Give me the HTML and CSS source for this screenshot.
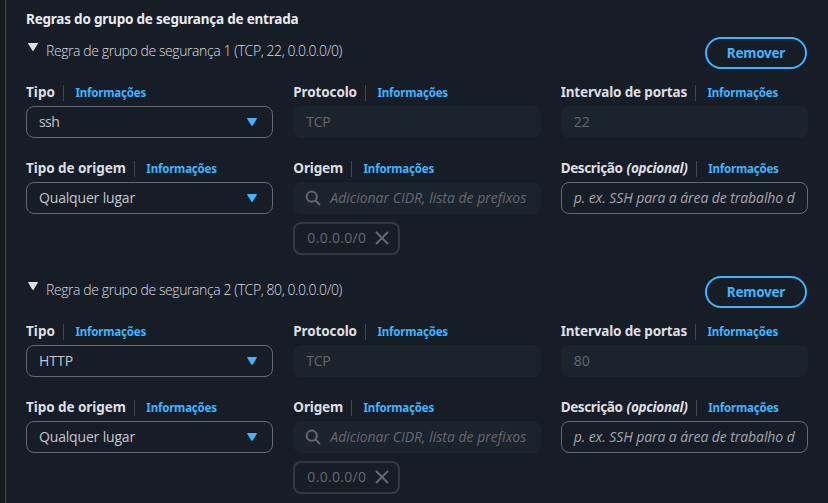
FILE: index.html
```html
<!DOCTYPE html>
<html lang="pt-BR">
<head>
<meta charset="utf-8">
<title>Regras do grupo de segurança</title>
<link rel="stylesheet" href="styles.css">
</head>
<body>
<main class="panel">
  <h1 class="heading">Regras do grupo de segurança de entrada</h1>

  <section class="rule">
    <header class="rule-header">
      <svg class="toggle" width="10" height="8" viewBox="0 0 10 8"><path d="M0.6 0H9.4Q10.2 0 9.8 0.8L5.7 7.5Q5 8.4 4.3 7.5L0.2 0.8Q-0.2 0 0.6 0Z"/></svg>
      <h2 class="rule-title">Regra de grupo de segurança 1 (TCP, 22, 0.0.0.0/0)</h2>
      <button class="remove">Remover</button>
    </header>
    <div class="grid">
      <div class="field">
        <div class="label-row"><span class="label t-tipo">Tipo</span><a class="info">Informações</a></div>
        <div class="control select"><span class="t-ssh">ssh</span><svg class="caret" width="10" height="8" viewBox="0 0 10 8"><path d="M0.6 0H9.4Q10.2 0 9.8 0.8L5.7 7.5Q5 8.4 4.3 7.5L0.2 0.8Q-0.2 0 0.6 0Z"/></svg></div>
      </div>
      <div class="field">
        <div class="label-row"><span class="label">Protocolo</span><a class="info">Informações</a></div>
        <div class="control disabled"><span class="t-tcp">TCP</span></div>
      </div>
      <div class="field">
        <div class="label-row"><span class="label t-ports">Intervalo de portas</span><a class="info">Informações</a></div>
        <div class="control disabled">22</div>
      </div>
      <div class="field">
        <div class="label-row"><span class="label t-source">Tipo de origem</span><a class="info">Informações</a></div>
        <div class="control select"><span class="t-any">Qualquer lugar</span><svg class="caret" width="10" height="8" viewBox="0 0 10 8"><path d="M0.6 0H9.4Q10.2 0 9.8 0.8L5.7 7.5Q5 8.4 4.3 7.5L0.2 0.8Q-0.2 0 0.6 0Z"/></svg></div>
      </div>
      <div class="field">
        <div class="label-row"><span class="label">Origem</span><a class="info">Informações</a></div>
        <div class="control disabled search"><svg width="16" height="16" viewBox="0 0 16 16"><circle cx="6.7" cy="6.7" r="5.1"/><path d="M10.4 10.4L15 15"/></svg><span class="placeholder">Adicionar CIDR, lista de prefixos</span></div>
        <div class="token"><span>0.0.0.0/0</span><svg width="14" height="14" viewBox="0 0 14 14"><path d="M1 1L13 13M13 1L1 13"/></svg></div>
      </div>
      <div class="field">
        <div class="label-row"><span class="label t-desc">Descrição</span><em class="optional">(opcional)</em><a class="info">Informações</a></div>
        <div class="control"><span class="example">p. ex. SSH para a área de trabalho d</span></div>
      </div>
    </div>
  </section>

  <section class="rule">
    <header class="rule-header">
      <svg class="toggle" width="10" height="8" viewBox="0 0 10 8"><path d="M0.6 0H9.4Q10.2 0 9.8 0.8L5.7 7.5Q5 8.4 4.3 7.5L0.2 0.8Q-0.2 0 0.6 0Z"/></svg>
      <h2 class="rule-title">Regra de grupo de segurança 2 (TCP, 80, 0.0.0.0/0)</h2>
      <button class="remove">Remover</button>
    </header>
    <div class="grid">
      <div class="field">
        <div class="label-row"><span class="label t-tipo">Tipo</span><a class="info">Informações</a></div>
        <div class="control select"><span>HTTP</span><svg class="caret" width="10" height="8" viewBox="0 0 10 8"><path d="M0.6 0H9.4Q10.2 0 9.8 0.8L5.7 7.5Q5 8.4 4.3 7.5L0.2 0.8Q-0.2 0 0.6 0Z"/></svg></div>
      </div>
      <div class="field">
        <div class="label-row"><span class="label">Protocolo</span><a class="info">Informações</a></div>
        <div class="control disabled"><span class="t-tcp">TCP</span></div>
      </div>
      <div class="field">
        <div class="label-row"><span class="label t-ports">Intervalo de portas</span><a class="info">Informações</a></div>
        <div class="control disabled">80</div>
      </div>
      <div class="field">
        <div class="label-row"><span class="label t-source">Tipo de origem</span><a class="info">Informações</a></div>
        <div class="control select"><span class="t-any">Qualquer lugar</span><svg class="caret" width="10" height="8" viewBox="0 0 10 8"><path d="M0.6 0H9.4Q10.2 0 9.8 0.8L5.7 7.5Q5 8.4 4.3 7.5L0.2 0.8Q-0.2 0 0.6 0Z"/></svg></div>
      </div>
      <div class="field">
        <div class="label-row"><span class="label">Origem</span><a class="info">Informações</a></div>
        <div class="control disabled search"><svg width="16" height="16" viewBox="0 0 16 16"><circle cx="6.7" cy="6.7" r="5.1"/><path d="M10.4 10.4L15 15"/></svg><span class="placeholder">Adicionar CIDR, lista de prefixos</span></div>
        <div class="token"><span>0.0.0.0/0</span><svg width="14" height="14" viewBox="0 0 14 14"><path d="M1 1L13 13M13 1L1 13"/></svg></div>
      </div>
      <div class="field">
        <div class="label-row"><span class="label t-desc">Descrição</span><em class="optional">(opcional)</em><a class="info">Informações</a></div>
        <div class="control"><span class="example">p. ex. SSH para a área de trabalho d</span></div>
      </div>
    </div>
  </section>
</main>
</body>
</html>
```
FILE: styles.css
```css
* { box-sizing: border-box; }

body {
  margin: 0;
  height: 503px;
  padding-left: 5px;
  overflow: hidden;
  background: #141920;
  color: #c6c6cd;
  font-family: "Open Sans", "Noto Sans", sans-serif;
  font-size: 14px;
  line-height: 20px;
}

.panel {
  height: 503px;
  padding: 9px 20px 0;
  border-left: 1px solid #424650;
  background: #161d26;
}

.heading {
  margin: 0 0 8px;
  color: #ebebf0;
  font: 700 13.5px/20px "Noto Sans", sans-serif;
  letter-spacing: -0.21px;
}

.rule { height: 239px; }

.rule-header {
  display: flex;
  align-items: flex-start;
  height: 32px;
  padding: 0 1px 0 2px;
}

.toggle {
  margin: 6px 8px 0 0;
  fill: #dedee3;
}

.rule-title {
  margin: 4px 0 0;
  color: #dcdce2;
  font-size: 14px;
  font-weight: 300;
  line-height: 20px;
  letter-spacing: -0.407px;
  white-space: nowrap;
}

.remove {
  width: 102px;
  height: 32px;
  margin-left: auto;
  padding: 0;
  border: 2px solid #42b4ff;
  border-radius: 16px;
  background: transparent;
  color: #42b4ff;
  font: 700 13.5px/20px "Noto Sans", sans-serif;
  letter-spacing: -0.25px;
}

.grid {
  display: grid;
  grid-template-columns: repeat(3, 1fr);
  gap: 20px;
  padding-top: 13px;
}

.field { min-width: 0; }

.label-row {
  display: flex;
  align-items: center;
  height: 20px;
  margin-bottom: 4px;
  white-space: nowrap;
}

.label, .optional {
  color: #dedee3;
  font: 700 13.5px/20px "Noto Sans", sans-serif;
  letter-spacing: -0.13px;
}

.optional {
  margin-left: 4px;
  font-style: italic;
  letter-spacing: -0.27px;
}

.info {
  height: 16px;
  margin-left: 8px;
  padding-left: 11.5px;
  border-left: 1px solid #424650;
  margin-top: 2px;
  color: #42b4ff;
  font: 700 11.5px/15px "Noto Sans", sans-serif;
  letter-spacing: -0.19px;
}

.t-tipo { letter-spacing: 0.04px; }
.t-ports { letter-spacing: -0.17px; }
.t-source { letter-spacing: -0.06px; }
.t-desc { letter-spacing: -0.37px; }
.t-ssh { letter-spacing: -0.6px; }
.t-any { letter-spacing: -0.17px; }
.t-tcp { letter-spacing: -0.3px; }

.control {
  display: flex;
  align-items: center;
  height: 32px;
  padding: 0 12px;
  border: 1px solid #656871;
  border-radius: 8px;
  white-space: nowrap;
}

.select {
  justify-content: space-between;
  padding-right: 15px;
}

.caret { fill: #42b4ff; }

.disabled {
  border-color: #1b232d;
  background: #1b232d;
  color: #656871;
}

.search { padding-left: 11px; }

.search svg {
  margin-right: 9px;
  fill: none;
  stroke: #656871;
  stroke-width: 2;
}

.placeholder, .example { font-style: italic; }

.example {
  color: #a4a4ad;
  letter-spacing: -0.08px;
}

.token {
  display: flex;
  align-items: center;
  justify-content: space-between;
  width: 107px;
  height: 33px;
  margin-top: 8px;
  padding: 0 9px 1px 12px;
  border: 2px solid #333843;
  border-radius: 8px;
  color: #656871;
  letter-spacing: 0.31px;
}

.token svg {
  fill: none;
  stroke: #656871;
  stroke-width: 2;
}
```
